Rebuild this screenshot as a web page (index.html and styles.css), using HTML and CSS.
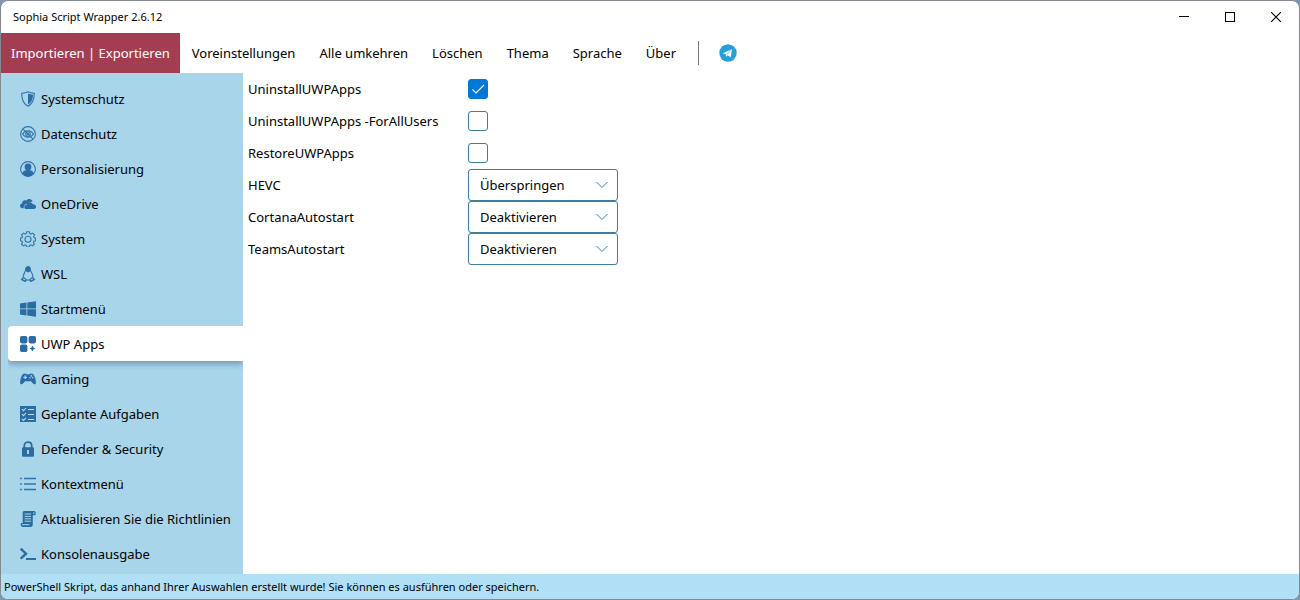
FILE: index.html
```html
<!DOCTYPE html>
<html lang="de">
<head>
<meta charset="utf-8">
<title>Sophia Script Wrapper 2.6.12</title>
<link rel="stylesheet" href="styles.css">
</head>
<body>
<div class="window">
  <header class="titlebar">
    <h1 class="title">Sophia Script Wrapper 2.6.12</h1>
    <div class="caption-buttons">
      <button class="caption" type="button" aria-label="Minimieren"><svg width="10" height="10" viewBox="0 0 10 10"><path d="M0 4.500h10" stroke="#000" fill="none"/></svg></button>
      <button class="caption" type="button" aria-label="Maximieren"><svg width="10" height="10" viewBox="0 0 10 10"><rect x=".5" y=".5" width="9" height="9" stroke="#000" fill="none"/></svg></button>
      <button class="caption" type="button" aria-label="Schließen"><svg width="10" height="10" viewBox="0 0 10 10"><path d="M0 0l10 10M10 0L0 10" stroke="#000" stroke-width="1.100" fill="none"/></svg></button>
    </div>
  </header>
  <nav class="menu" aria-label="Menü">
    <button class="menu-item menu-item-active" type="button">Importieren | Exportieren</button>
    <button class="menu-item" type="button">Voreinstellungen</button>
    <button class="menu-item" type="button">Alle umkehren</button>
    <button class="menu-item" type="button">Löschen</button>
    <button class="menu-item" type="button">Thema</button>
    <button class="menu-item" type="button">Sprache</button>
    <button class="menu-item" type="button">Über</button>
    <span class="divider"></span>
    <a class="telegram" href="#" aria-label="Telegram"><svg width="18" height="18" viewBox="0 0 18 18"><circle cx="9" cy="9" r="8.700" fill="#279fda"/><path d="M3.800 9.200L13 5.200l-1.300 8-3.200-2-1.200 1.500-.5-2.400z" fill="#fff"/><path d="M7 10.300l4.500-3.800-3 4.200" fill="none" stroke="#7fc4e8" stroke-width=".7"/></svg></a>
  </nav>
  <div class="body">
    <nav class="sidebar" aria-label="Kategorien">
      <a class="nav-item" href="#"><svg class="icon" viewBox="0 0 16 16"><path d="M8 .8C6 1.800 4 2.200 1.700 2.400c0 6 1.300 10 6.300 12.800 5-2.800 6.300-6.800 6.300-12.800C12 2.200 10 1.800 8 .8z" class="line"/><path d="M8 2.500v11.200c3.700-2.400 4.900-5.500 5-10C11.200 3.500 9.600 3.200 8 2.500z"/></svg>Systemschutz</a>
      <a class="nav-item" href="#"><svg class="icon" viewBox="0 0 16 16"><circle cx="8" cy="8" r="7.400" class="line"/><path d="M2.500 8C5.200 3.700 10.800 3.700 13.500 8c-2.700 4.300-8.300 4.300-11 0z" class="line"/><circle cx="8" cy="8" r="2.300" class="line"/><circle cx="8" cy="8" r="1"/><path d="M2.800 2.800l10.400 10.400" class="line"/></svg>Datenschutz</a>
      <a class="nav-item" href="#"><svg class="icon" viewBox="0 0 16 16"><circle cx="8" cy="8" r="7.400" class="line"/><circle cx="8" cy="6" r="3.400"/><path d="M2 12.500c.8-2.400 2.800-3.500 6-3.500s5.200 1.100 6 3.500C12.500 14.600 10.500 15.400 8 15.400s-4.500-.8-6-2.900z"/></svg>Personalisierung</a>
      <a class="nav-item" href="#"><svg class="icon" viewBox="0 0 16 16"><path d="M3.600 12.200H2.400C-.6 12.200-.6 8 2 7.600 2 4.700 4.600 3.600 6.300 4.600c1.700-2.600 5.600-2 6.300 1.200-2.200-.5-4 .5-4.700 1.900-2.500-.5-4.300 1.700-4.300 4.500z"/><path d="M6.300 13c-2.700 0-2.700-4.300.2-4.300.5-2.700 4.800-3.500 6.200-.4 4.300-.2 4.300 4.700 1.200 4.700z"/></svg>OneDrive</a>
      <a class="nav-item" href="#"><svg class="icon" viewBox="0 0 16 16"><path class="line" d="M6.700.7h2.600l.5 1.900 1.200.5 1.800-1 1.800 1.800-1 1.800.5 1.100 1.500.4v2.500l-1.700.5-.5 1.200 1 1.700-1.900 1.800-1.700-1-1.100.5-.5 1.700H6.700l-.5-1.700-1.200-.5-1.700 1-1.800-1.800 1-1.700-.5-1.200-1.500-.5V7.200L2 6.800l.5-1.200-1-1.700 1.900-1.800 1.700 1 1.100-.5z"/><circle cx="8" cy="8.200" r="3" class="line"/></svg>System</a>
      <a class="nav-item" href="#"><svg class="icon" viewBox="0 0 16 16"><path class="line" d="M5.700 3.500C5.700-.3 10.300-.3 10.300 3.500c0 2.600 3.200 4.300 2.600 8L14.500 13.500 11 15.300 9.500 14h-3L5 15.300 1.500 13.500l1.700-2c-.5-3.500 2.500-5.500 2.500-8z"/><path d="M5.700 5V3c0-3 4.600-3 4.600 0v2.200L8 6.400z"/><path d="M1.700 13.300l2-2 2.500 2.500L5 15.300zM14.300 13.300l-2-2-2.500 2.500 1.200 1.500z" class="line"/></svg>WSL</a>
      <a class="nav-item" href="#"><svg class="icon" viewBox="0 0 16 16"><path d="M0 2.400l6.500-.9v6H0zM7.300 1.400L16 .2v7.300H7.300zM0 8.300h6.500v6.100L0 13.500zM7.300 8.300H16v7.500l-8.700-1.300z"/></svg>Startmenü</a>
      <a class="nav-item nav-item-active" href="#" aria-current="page"><svg class="icon" viewBox="0 0 16 16"><rect width="7.400" height="7.400" rx="1.800"/><rect x="8.600" width="7.400" height="7.400" rx="1.800"/><rect y="8.600" width="7.400" height="7.400" rx="1.800"/><path d="M12.400 9.500l1 2 2 1-2 1-1 2-1-2-2-1 2-1z"/></svg>UWP Apps</a>
      <a class="nav-item" href="#"><svg class="icon" viewBox="0 0 16 16"><path fill-rule="evenodd" d="M3.500 2.800l2-.3 1 .8h3l1-.8 2 .3c2 .8 3.500 6 3.400 9-.2 2-2 2-3.400.2L11 10.300H5L3.500 12C2 13.800.3 13.800.1 11.800c0-3 1.400-8.200 3.400-9zM4.600 4.600v1.200H3.400v1.100h1.200v1.200h1.200V6.900H7V5.800H5.800V4.600zM11.500 4a.9.900 0 100 1.800.9.900 0 000-1.800zM10 6a.8.800 0 100 1.600A.8.800 0 0010 6zM12.700 6a.8.800 0 100 1.600.8.800 0 000-1.600z"/></svg>Gaming</a>
      <a class="nav-item" href="#"><svg class="icon" viewBox="0 0 16 16"><rect width="16" height="16"/><path d="M2 3.200l1.500 1.500L6 2M2 8.200l1.500 1.500L6 7M2 13l1.500 1.500L6 11.800M8 3.500h6M8 8.500h6M8 13.500h6" fill="none" stroke="#b9def2" stroke-width="1.100"/></svg>Geplante Aufgaben</a>
      <a class="nav-item" href="#"><svg class="icon" viewBox="0 0 16 16"><path d="M4.300 7V4.500c0-4.600 7.400-4.600 7.400 0V7" fill="none" stroke="#2b6ca3" stroke-width="1.800"/><rect x="2" y="6.200" width="12" height="9.600" rx="1.300"/><path d="M8 9v4" stroke="#b9def2" stroke-width="1.800"/></svg>Defender &amp; Security</a>
      <a class="nav-item" href="#"><svg class="icon" viewBox="0 0 16 16"><path d="M4 2.500h12M4 8h12M4 13.500h12M0 2.500h1.800M0 8h1.800M0 13.500h1.800" stroke="#2f74a8" stroke-width="1.600"/></svg>Kontextmenü</a>
      <a class="nav-item" href="#"><svg class="icon" viewBox="0 0 16 16"><path d="M4 0h10.200c2 .3 2 4.300.4 4.300H12.800v9.200c0 1.600-1 2.400-2.200 2.400H2.500C.2 15.900.2 12.200 1.500 12h1.200V2c0-1 .4-2 1.300-2z"/><path d="M4.600 3h6.400M4.600 5.400h6.400M4.600 7.800h6.400M4.600 10.200h6.400M2 13.700h7.500M13.800 1.300v1.700" fill="none" stroke="#a8d4ec"/></svg>Aktualisieren Sie die Richtlinien</a>
      <a class="nav-item" href="#"><svg class="icon" viewBox="0 0 16 16"><path d="M.7 2.700l5.300 5-5.300 5" fill="none" stroke="#2b6ca3" stroke-width="2.400"/><path d="M6 13h10" stroke="#2b6ca3" stroke-width="2"/></svg>Konsolenausgabe</a>
    </nav>
    <main class="settings">
      <div class="row"><label class="row-label" for="uninstall">UninstallUWPApps</label><input class="check" id="uninstall" type="checkbox" checked></div>
      <div class="row"><label class="row-label" for="uninstall-all">UninstallUWPApps -ForAllUsers</label><input class="check" id="uninstall-all" type="checkbox"></div>
      <div class="row"><label class="row-label" for="restore">RestoreUWPApps</label><input class="check" id="restore" type="checkbox"></div>
      <div class="row"><label class="row-label" for="hevc">HEVC</label><select class="select" id="hevc"><option>Überspringen</option></select></div>
      <div class="row"><label class="row-label" for="cortana">CortanaAutostart</label><select class="select" id="cortana"><option>Deaktivieren</option></select></div>
      <div class="row"><label class="row-label" for="teams">TeamsAutostart</label><select class="select" id="teams"><option>Deaktivieren</option></select></div>
    </main>
  </div>
  <footer class="status">PowerShell Skript, das anhand Ihrer Auswahlen erstellt wurde! Sie können es ausführen oder speichern.</footer>
</div>
</body>
</html>
```
FILE: styles.css
```css
* {
  box-sizing: border-box;
}

body {
  margin: 0;
  background: #7e97b5;
  color: #000;
  font: 13px/20px "Noto Sans", "Open Sans", sans-serif;
}

button,
select {
  font: inherit;
  color: inherit;
}

.window {
  display: flex;
  flex-direction: column;
  min-height: 100vh;
  overflow: hidden;
  border: 1px solid #85898f;
  border-radius: 8px;
  background: #fff;
}

.titlebar {
  display: flex;
  justify-content: space-between;
  height: 32px;
  padding-left: 12px;
}

.title {
  margin: 0;
  font-size: 11px;
  font-weight: 400;
  line-height: 32px;
}

.caption-buttons {
  display: flex;
}

.caption {
  display: flex;
  align-items: center;
  justify-content: center;
  width: 46px;
  padding: 0;
  border: 0;
  background: none;
}

.menu {
  display: flex;
  align-items: center;
  height: 40px;
}

.menu-item {
  height: 40px;
  padding: 0 12px;
  border: 0;
  background: none;
  white-space: nowrap;
}

.menu-item-active {
  padding: 0 10px;
  background: #a33e52;
  color: #fff;
}

.divider {
  width: 1px;
  height: 24px;
  margin: 0 20px 0 10px;
  background: #777;
}

.telegram {
  display: flex;
}

.body {
  display: flex;
  flex: 1;
}

.sidebar {
  flex: none;
  width: 242px;
  padding: 8px 0 3px 7px;
  background: #a9d5eb;
}

.nav-item {
  display: flex;
  align-items: center;
  gap: 5px;
  height: 35px;
  padding-left: 12px;
  border-radius: 4px 0 0 4px;
  color: inherit;
  text-decoration: none;
  white-space: nowrap;
}

.nav-item-active {
  background: #fff;
  box-shadow: 0 3px 6px rgba(0, 40, 70, 0.35);
  clip-path: inset(0 0 -10px 0);
}

.icon {
  flex: none;
  width: 16px;
  height: 16px;
  fill: #2b6ca3;
}

.line {
  fill: none;
  stroke: #2f74a8;
  stroke-width: 1.1;
}

.settings {
  flex: 1;
  padding-left: 5px;
}

.row {
  display: flex;
  align-items: center;
  height: 32px;
}

.row-label {
  width: 220px;
}

.check {
  width: 20px;
  height: 20px;
  margin: 0;
  border: 1px solid #3a7f9f;
  border-radius: 3px;
  appearance: none;
  background: #fff;
}

.check:checked {
  border-color: #0078d7;
  background: #0078d7 url("data:image/svg+xml,%3Csvg xmlns='http://www.w3.org/2000/svg' viewBox='0 0 18 18'%3E%3Cpath d='M3.500 9.500l3.500 3.500 8-8' fill='none' stroke='white' stroke-width='1.100'/%3E%3C/svg%3E") center / 18px;
}

.select {
  width: 150px;
  height: 32px;
  padding: 0 32px 0 11px;
  border: 1px solid #3a7f9f;
  border-radius: 3px;
  appearance: none;
  background: #fff url("data:image/svg+xml,%3Csvg xmlns='http://www.w3.org/2000/svg' viewBox='0 0 12 8'%3E%3Cpath d='M.5 1l5.500 5.500L11.500 1' fill='none' stroke='%23388a94'/%3E%3C/svg%3E") no-repeat right 9px center / 12px 8px;
}

.status {
  height: 25px;
  padding-left: 3px;
  background: #b1dff6;
  font-size: 11px;
  line-height: 25px;
}
```
